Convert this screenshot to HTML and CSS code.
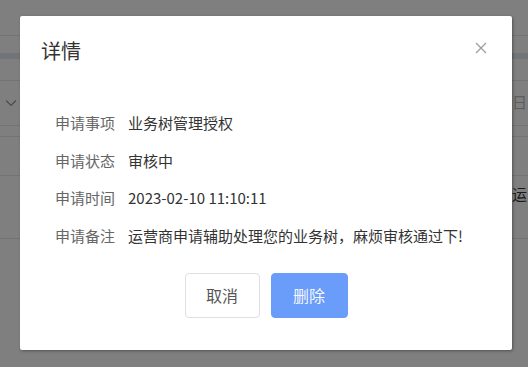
FILE: index.html
```html
<!DOCTYPE html>
<html lang="zh-CN">
<head>
<meta charset="utf-8">
<title>详情</title>
<link rel="stylesheet" href="styles.css">
</head>
<body>
<div class="page">
  <div class="topbar"></div>
  <div class="band"></div>
  <div class="filter">
    <svg class="chev" width="12" height="8" viewBox="0 0 12 8"><path d="M1 1.5 L6 6.5 L11 1.5" fill="none" stroke="#999" stroke-width="1.2"/></svg>
    <span class="ph">束日</span>
  </div>
  <div class="thead"></div>
  <div class="trow"></div>
  <div class="trow tall"><span class="cell">运</span></div>
</div>
<div class="mask"></div>
<div class="modal">
  <div class="modal-header">
    <div class="modal-title">详情</div>
    <svg class="close" width="12" height="12" viewBox="0 0 12 12"><path d="M1 1 L11 11 M11 1 L1 11" stroke="#9a9a9a" stroke-width="1.2" fill="none"/></svg>
  </div>
  <div class="modal-body">
    <div class="row"><span class="label">申请事项</span><span class="value">业务树管理授权</span></div>
    <div class="row"><span class="label">申请状态</span><span class="value">审核中</span></div>
    <div class="row"><span class="label">申请时间</span><span class="value">2023-02-10 11:10:11</span></div>
    <div class="row"><span class="label">申请备注</span><span class="value">运营商申请辅助处理您的业务树，麻烦审核通过下!</span></div>
  </div>
  <div class="modal-footer">
    <button class="btn btn-cancel">取消</button>
    <button class="btn btn-primary">删除</button>
  </div>
</div>
</body>
</html>
```

FILE: styles.css
```css
html, body {
  margin: 0;
  padding: 0;
}
body {
  width: 528px;
  height: 367px;
  overflow: hidden;
  position: relative;
  background: #fff;
  font-family: "Noto Sans CJK SC", "Noto Sans", sans-serif;
}
.page {
  width: 528px;
  height: 367px;
}
.topbar {
  height: 35px;
  border-bottom: 1px solid #e6e6e6;
}
.band {
  margin-top: 17px;
  height: 6px;
  background: #e3e8f0;
}
.filter {
  height: 44px;
  border-top: 1px solid #e6e6e6;
  border-bottom: 1px solid #e6e6e6;
  margin-top: 21px;
  display: flex;
  align-items: center;
  justify-content: space-between;
  padding-left: 5px;
  padding-right: 1px;
}
.chev {
  display: block;
}
.ph {
  font-size: 15px;
  color: #bbb;
  margin-top: -4px;
}
.thead {
  height: 10px;
  border-bottom: 1px solid #e6e6e6;
}
.trow {
  height: 38px;
  border-bottom: 1px solid #e6e6e6;
}
.trow.tall {
  height: 62px;
  display: flex;
  justify-content: flex-end;
  align-items: flex-start;
}
.cell {
  font-size: 15px;
  color: #333;
  margin-right: 1px;
  margin-top: 7px;
}
.mask {
  position: absolute;
  inset: 0;
  background: rgba(0, 0, 0, 0.5);
}
.modal {
  position: absolute;
  left: 20px;
  top: 16px;
  width: 492px;
  height: 334px;
  background: #fff;
  border-radius: 2px;
  box-shadow: 1px 1px 3px rgba(0, 0, 0, 0.35);
  display: flex;
  flex-direction: column;
  box-sizing: border-box;
}
.modal-header {
  display: flex;
  justify-content: space-between;
  align-items: flex-start;
  padding: 22px 25px 0 21px;
}
.modal-title {
  font-size: 20px;
  line-height: 26px;
  color: #333;
}
.close {
  display: block;
  margin-top: 4px;
}
.modal-body {
  padding: 48px 0 0 35px;
  display: flex;
  flex-direction: column;
  gap: 15.6px;
}
.row {
  display: flex;
  gap: 13px;
  font-size: 15px;
  line-height: 22px;
}
.label {
  color: #666;
}
.value {
  color: #333;
}
.modal-footer {
  display: flex;
  justify-content: center;
  gap: 11px;
  margin-top: 26px;
}
.btn {
  height: 45px;
  border-radius: 4px;
  font-family: "Noto Sans CJK SC", "Noto Sans", sans-serif;
  font-size: 16px;
  padding: 0;
  cursor: pointer;
}
.btn-cancel {
  width: 75px;
  background: #fff;
  border: 1px solid #dcdfe6;
  color: #555;
}
.btn-primary {
  width: 77px;
  background: #6a9cf9;
  border: 1px solid #6a9cf9;
  color: #f4f8ff;
}
```
